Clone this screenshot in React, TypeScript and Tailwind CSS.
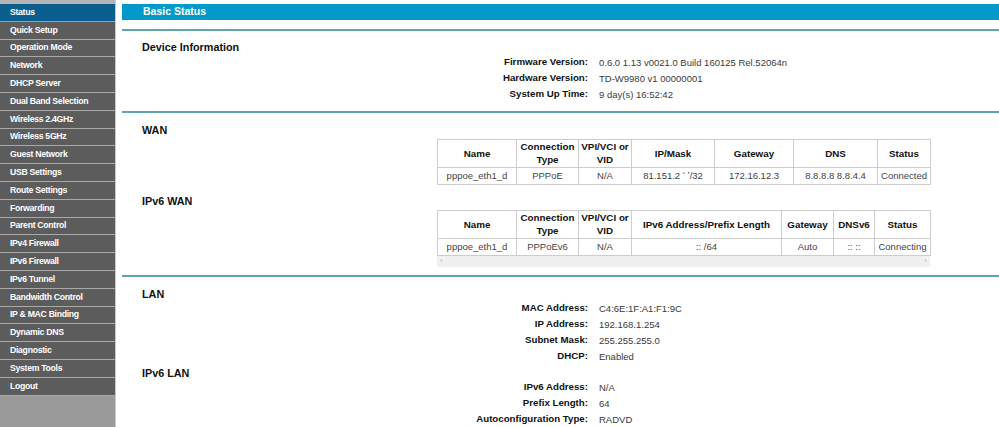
import React from "react";

const menu = [
  "Status",
  "Quick Setup",
  "Operation Mode",
  "Network",
  "DHCP Server",
  "Dual Band Selection",
  "Wireless 2.4GHz",
  "Wireless 5GHz",
  "Guest Network",
  "USB Settings",
  "Route Settings",
  "Forwarding",
  "Parent Control",
  "IPv4 Firewall",
  "IPv6 Firewall",
  "IPv6 Tunnel",
  "Bandwidth Control",
  "IP & MAC Binding",
  "Dynamic DNS",
  "Diagnostic",
  "System Tools",
  "Logout",
];

function Sidebar() {
  return (
    <div className="flex w-[116px] shrink-0 flex-col border-r border-[#c9c9c9] bg-[#9a9a9a]">
      <div className="h-[4px] bg-[#b5b5b5]" />
      {menu.map((item, i) => (
        <div
          key={item}
          className={
            i === 0
              ? "flex h-[17.8px] items-center border-b border-[#8aa7b8] bg-[#0b5f8e] pl-[10px] text-[8.7px] font-bold tracking-[-0.3px] text-white"
              : "flex h-[17.8px] items-center border-b border-[#a9a9a9] bg-[#5c5c5c] pl-[10px] text-[8.7px] font-bold tracking-[-0.3px] text-white"
          }
        >
          {item}
        </div>
      ))}
    </div>
  );
}

function Rule() {
  return <div className="h-[2px] bg-[#5ea3b1]" />;
}

function Heading({ children }: { children: React.ReactNode }) {
  return <div className="h-[16px] pl-[20px] text-[10.8px] font-bold leading-[16px] text-[#111]">{children}</div>;
}

function InfoRows({ rows }: { rows: [string, string][] }) {
  return (
    <div className="flex flex-col">
      {rows.map(([label, value]) => (
        <div key={label} className="flex h-[16px] items-center">
          <div className="w-[466px] text-right text-[9.7px] font-bold text-[#111]">{label}</div>
          <div className="pl-[11px] text-[9.5px] text-[#3a3a3a]">{value}</div>
        </div>
      ))}
    </div>
  );
}

function DataTable({ widths, head, row }: { widths: number[]; head: React.ReactNode[]; row: string[] }) {
  return (
    <table className="table-fixed border-collapse" style={{ width: 493 }}>
      <colgroup>
        {widths.map((w, i) => (
          <col key={i} style={{ width: w }} />
        ))}
      </colgroup>
      <tbody>
        <tr className="h-[28px]">
          {head.map((h, i) => (
            <td
              key={i}
              className="whitespace-nowrap border border-[#cdcdcd] p-0 text-center text-[9.8px] font-bold leading-[13px] text-[#111]"
            >
              {h}
            </td>
          ))}
        </tr>
        <tr className="h-[17px]">
          {row.map((c, i) => (
            <td
              key={i}
              className="whitespace-nowrap border border-[#cdcdcd] p-0 text-center text-[9.5px] leading-[13px] text-[#444]"
            >
              {c}
            </td>
          ))}
        </tr>
      </tbody>
    </table>
  );
}

const connHead = (
  <>
    Connection
    <br />
    Type
  </>
);
const vpiHead = (
  <>
    VPI/VCI or
    <br />
    VID
  </>
);

export default function App() {
  return (
    <div className="flex h-[427px] w-[999px] overflow-hidden bg-white font-['Liberation_Sans',Arial,sans-serif]">
      <Sidebar />
      <div className="flex flex-1 flex-col pl-[6px] pt-[4px]">
        <div className="flex h-[16px] items-center bg-[#0399cb] pl-[21px] text-[10.5px] font-bold text-white">Basic Status</div>
        <div className="mt-[9px]">
          <Rule />
        </div>
        <div className="mt-[8px]">
          <Heading>Device Information</Heading>
        </div>
        <InfoRows
          rows={[
            ["Firmware Version:", "0.6.0 1.13 v0021.0 Build 160125 Rel.52064n"],
            ["Hardware Version:", "TD-W9980 v1 00000001"],
            ["System Up Time:", "9 day(s) 16:52:42"],
          ]}
        />
        <div className="mt-[8px]">
          <Rule />
        </div>
        <div className="mt-[9px]">
          <Heading>WAN</Heading>
        </div>
        <div className="ml-[315px] mt-[1px]">
          <DataTable
            widths={[79, 62, 53, 83, 79, 84, 53]}
            head={["Name", connHead, vpiHead, "IP/Mask", "Gateway", "DNS", "Status"]}
            row={["pppoe_eth1_d", "PPPoE", "N/A", "81.151.2  \u02bb  \u02bc/32", "172.16.12.3", "8.8.8.8 8.8.4.4", "Connected"]}
          />
        </div>
        <div className="mt-[8px]">
          <Heading>IPv6 WAN</Heading>
        </div>
        <div className="ml-[315px] mt-[1px] w-[493px]">
          <DataTable
            widths={[79, 62, 53, 150, 52, 41, 56]}
            head={["Name", connHead, vpiHead, "IPv6 Address/Prefix Length", "Gateway", "DNSv6", "Status"]}
            row={["pppoe_eth1_d", "PPPoEv6", "N/A", ":: /64", "Auto", ":: ::", "Connecting"]}
          />
          <div className="flex h-[11px] items-center justify-between bg-[#f0f0f0] px-[3px] text-[8px] leading-none text-[#b5b5b5]">
            <span>&lsaquo;</span>
            <span>&rsaquo;</span>
          </div>
        </div>
        <div className="mt-[8px]">
          <Rule />
        </div>
        <div className="mt-[9px]">
          <Heading>LAN</Heading>
        </div>
        <div className="-mt-[1px]">
          <InfoRows
            rows={[
              ["MAC Address:", "C4:6E:1F:A1:F1:9C"],
              ["IP Address:", "192.168.1.254"],
              ["Subnet Mask:", "255.255.255.0"],
              ["DHCP:", "Enabled"],
            ]}
          />
        </div>
        <Heading>IPv6 LAN</Heading>
        <div className="-mt-[1px]">
          <InfoRows
            rows={[
              ["IPv6 Address:", "N/A"],
              ["Prefix Length:", "64"],
              ["Autoconfiguration Type:", "RADVD"],
            ]}
          />
        </div>
      </div>
    </div>
  );
}
